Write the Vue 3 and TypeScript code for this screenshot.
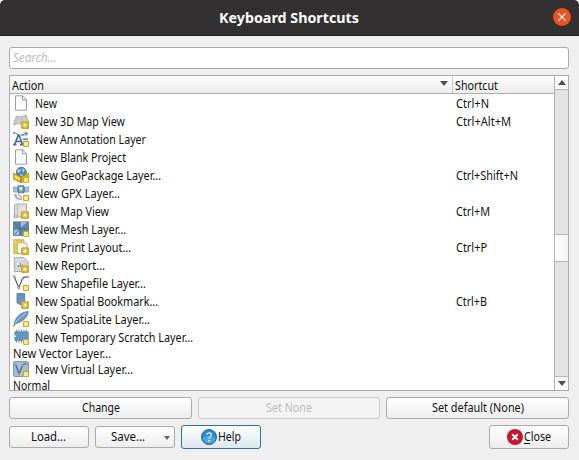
<script setup lang="ts">
interface Row { label: string; icon?: string; key?: string; badge?: 'star' | 'box'; w: number }

const rows: Row[] = [
  { label: 'New', icon: 'page', key: 'Ctrl+N', w: 22 },
  { label: 'New 3D Map View', icon: 'map3d', key: 'Ctrl+Alt+M', badge: 'star', w: 90 },
  { label: 'New Annotation Layer', icon: 'annot', badge: 'box', w: 111 },
  { label: 'New Blank Project', icon: 'page', w: 91 },
  { label: 'New GeoPackage Layer…', icon: 'geo', key: 'Ctrl+Shift+N', badge: 'box', w: 126 },
  { label: 'New GPX Layer…', icon: 'gpx', badge: 'box', w: 85 },
  { label: 'New Map View', icon: 'map', key: 'Ctrl+M', badge: 'star', w: 74 },
  { label: 'New Mesh Layer…', icon: 'mesh', badge: 'box', w: 91 },
  { label: 'New Print Layout…', icon: 'print', key: 'Ctrl+P', badge: 'star', w: 96 },
  { label: 'New Report…', icon: 'report', badge: 'star', w: 70 },
  { label: 'New Shapefile Layer…', icon: 'shape', badge: 'box', w: 111 },
  { label: 'New Spatial Bookmark…', icon: 'bookmark', key: 'Ctrl+B', badge: 'star', w: 123 },
  { label: 'New SpatiaLite Layer…', icon: 'feather', badge: 'box', w: 115 },
  { label: 'New Temporary Scratch Layer…', icon: 'chip', badge: 'box', w: 158 },
  { label: 'New Vector Layer…', w: 98 },
  { label: 'New Virtual Layer…', icon: 'virtual', badge: 'box', w: 98 },
  { label: 'Normal', w: 37 },
]

const keyWidths: Record<string, number> = {
  'Ctrl+N': 33, 'Ctrl+Alt+M': 55, 'Ctrl+Shift+N': 62, 'Ctrl+M': 34, 'Ctrl+P': 31, 'Ctrl+B': 31,
}
</script>

<template>
  <div class="dialog">
    <header class="titlebar">
      <svg class="title" width="140" height="20"><text x="0" y="14" textLength="140" lengthAdjust="spacingAndGlyphs">Keyboard Shortcuts</text></svg>
      <button class="x" aria-label="Close window">
        <svg width="18" height="18" viewBox="0 0 18 18"><circle cx="9" cy="9" r="9" fill="#e95420" /><path d="M5.4 5.4l7.2 7.2M12.6 5.4l-7.2 7.2" stroke="#fff" stroke-width="1.3" /></svg>
      </button>
    </header>
    <main>
      <div class="search">Search…</div>
      <section class="table">
        <div class="content">
          <div class="head">
            <div class="h1"><svg class="label" width="34" height="16"><text y="13" textLength="32" lengthAdjust="spacingAndGlyphs">Action</text></svg><svg class="sort" width="8" height="5"><path d="M0 0h8L4 5z" fill="#505050" /></svg></div>
            <div class="h2"><svg width="45" height="16"><text y="13" textLength="43" lengthAdjust="spacingAndGlyphs">Shortcut</text></svg></div>
          </div>
          <div class="rows">
            <div v-for="r in rows" :key="r.label" class="row" :class="{ plain: !r.icon }">
              <div class="name">
                <svg v-if="r.icon" class="icon" width="16" height="16" viewBox="0 0 16 16">
                  <path v-if="r.icon === 'page'" d="M2.5 .8h7l4 4v10.4h-11zM9.5 .8v4h4" fill="#fbfbfb" stroke="#9c9e9c" />
                  <g v-else-if="r.icon === 'map3d'">
                    <path d="M3.5 3l4 .7L13 2l3 8-6 1.5-5-1L.3 12z" fill="#c3c5c2" stroke="#aaaca8" stroke-width=".8" /><path d="M7.5 4l-2 6.5M10 3.5l2 6.5M2 8l12-1" stroke="#d9d9d7" stroke-width=".6" />
                  </g>
                  <g v-else-if="r.icon === 'annot'">
                    <path d="M1.8 13.2L5 4.8h1.3l3.1 8.4M3.3 10.5h4.8M.2 13.7h3.2M7 13.7h3" fill="none" stroke="#3f6c98" stroke-width="1.7" />
                    <path d="M1 2h2l2 2h5l1.5-1.5" fill="none" stroke="#71899d" /><path d="M.2 1.2h1.6v1.6H.2zM4.5 3.2h1.6v1.6H4.5zM9 3.2h1.6v1.6H9z" fill="#54718a" /><path d="M13 0l.8 1.7 2 .1-1.5 1.4.4 1.9-1.7-1-1.7 1 .4-1.9-1.5-1.4 2-.1zM9.8 7.3H15v1.9H9.8z" fill="#6890b6" />
                  </g>
                  <g v-else-if="r.icon === 'geo'">
                    <circle cx="8.3" cy="5.2" r="5" fill="#5686b2" stroke="#315c85" stroke-width=".7" /><path d="M4 3l3-1 1 2-3 2zM9 1l3 2-2 3zM7 7l3 1-2 2z" fill="#bdd4e3" />
                    <path d="M.5 6L8 10v5.7L.5 12.2zM15.7 6L8 10v5.7l7.7-3.5z" fill="#dcb515" stroke="#937b18" stroke-width=".6" /><path d="M1.7 8L7 10.7v2.8L1.7 11z" fill="#f8de60" />
                  </g>
                  <g v-else-if="r.icon === 'gpx'">
                    <path d="M.5 2h4v5h-4zM11.5 2h4v5h-4z" fill="#a8c4dc" stroke="#7295b2" stroke-width=".7" /><path d="M5 .8h6v7H5zM4 4.5h8" fill="#7599b9" stroke="#426e94" stroke-width=".8" />
                    <path d="M6.2 2h3.4v3.4H6.2z" fill="#d6e4ec" /><path d="M1 9c0 4 3 6.5 8 6.3v-2c-3.2 0-5.4-1.3-5.4-4.3z" fill="#9bb6ca" /><path d="M5.8 9c0 2 1 3 3.2 3" fill="none" stroke="#668baa" />
                  </g>
                  <g v-else-if="r.icon === 'map'">
                    <path d="M2.5 1h11v13h-12V2z" fill="#dddedc" stroke="#a9aba8" /><path d="M4.5 1v13" stroke="#b9bbb8" /><path d="M.7 12.3h3v2.8h-3z" fill="#c2c4c1" stroke="#a8aaa7" stroke-width=".6" /><path d="M5.5 5h7M8 10l4-8" stroke="#ebebea" stroke-width=".7" />
                  </g>
                  <g v-else-if="r.icon === 'mesh'">
                    <path d="M.5.8h15v13.7H.5z" fill="#5f89ae" stroke="#577792" stroke-width=".8" /><path d="M7.5 1h7.7L7.5 8zM1 8h5.5v6H1z" fill="#a2bfd6" /><path d="M.5 8h15M7 1v13M7 8l8-7M1 14l6-6M1 1l6 7" fill="none" stroke="#395c7b" stroke-width=".7" />
                  </g>
                  <g v-else-if="r.icon === 'print'">
                    <path d="M4 2.5h7l3 3v9H4z" fill="#fff" stroke="#a2a49e" /><path d="M.8 .7h10v3H4.2v11H.8z" fill="#f0d568" stroke="#c0a334" stroke-width=".8" /><path d="M3.5 1v1.3M6 1v1.3M8.5 1v1.3M1 6h1.5M1 9h1.5M1 12h1.5" stroke="#a98e2e" stroke-width=".6" />
                    <path d="M10.5 2.5v3.2H14z" fill="#d6d7d3" />
                  </g>
                  <g v-else-if="r.icon === 'report'">
                    <path d="M1.3.7h9.7l4 4v9.8H1.3z" fill="#dddddd" stroke="#a5a7a5" /><path d="M3 5h9v7H3z" fill="#f1f1f3" stroke="#b3b7bd" stroke-width=".7" /><path d="M5.2 10.5V8M7.2 10.5V6" stroke="#6f8ba8" stroke-width="1.3" /><path d="M9.6 10V6.5" stroke="#bd777b" stroke-width="1.3" />
                  </g>
                  <g v-else-if="r.icon === 'shape'">
                    <path d="M1.3 1.8L5.8 12.8 9.3 4Q10.5 1.5 14.8 2" fill="none" stroke="#59636a" stroke-width="1.2" /><path d="M.4 .8h1.8v1.8H.4zM4.9 12h1.8v1.8H4.9zM8.4 3.2h1.8V5H8.4zM13.8 1h1.8v1.8h-1.8z" fill="#eef0f1" stroke="#7d878f" stroke-width=".7" />
                  </g>
                  <path v-else-if="r.icon === 'bookmark'" d="M4 .6h7.7v13.8L8 12 4 9.8z" fill="#6695c1" stroke="#50728f" stroke-width=".8" />
                  <g v-else-if="r.icon === 'feather'">
                    <path d="M1.3 13.5C2 6 8 1 15.2.5c-.3 5-5.2 10.7-13 12.2" fill="#6d9ac3" stroke="#466d91" stroke-width=".7" /><path d="M1 15C3 9.5 7 6 13 2" fill="none" stroke="#d4e2ed" stroke-width=".8" /><path d="M.5 15.5l2-3.5" stroke="#4b6880" />
                  </g>
                  <g v-else-if="r.icon === 'chip'">
                    <path d="M3.5 .8v13M6 .8v13M8.5 .8v13M11 .8v10M13.5 .8v10" stroke="#7e95a8" stroke-width="1.1" /><path d="M1.8 2.8h13.5v8.6H1.8z" fill="#6595c2" stroke="#5380a7" stroke-width=".7" /><path d="M1.4 6.3h1.4v1.6H1.4z" fill="#fff" />
                  </g>
                  <g v-else-if="r.icon === 'virtual'">
                    <rect x=".5" y=".5" width="15" height="15" rx="1.5" fill="#a7bdcf" stroke="#7f9bb2" /><path d="M2.3 2.8L6 12.8 9.5 4.5Q11 2 14 2.7" fill="none" stroke="#465c70" stroke-width="1.1" /><path d="M1.5 2h1.6v1.6H1.5zM5.2 12h1.6v1.6H5.2zM8.7 3.5h1.6v1.6H8.7zM13 2h1.6v1.6H13z" fill="#e7eef3" stroke="#647f96" stroke-width=".5" />
                  </g>
                  <g v-if="r.badge === 'box'"><rect x="10.5" y="10.5" width="5" height="5" rx=".7" fill="#f5e9a4" stroke="#cfaa20" stroke-width="1.2" /></g>
                  <g v-else-if="r.badge === 'star'"><rect x="8" y="8.2" width="8" height="7.8" rx="1.2" fill="#cfab2a" /><path d="M12 9.5v5.2M9.4 12.1h5.2M10.3 10.4l3.4 3.4M13.7 10.4l-3.4 3.4" stroke="#fff4c0" stroke-width=".9" /></g>
                </svg>
                <svg class="label" :width="r.w + 2" height="16"><text x="0" y="12.7" :textLength="r.w" lengthAdjust="spacingAndGlyphs">{{ r.label }}</text></svg>
              </div>
              <svg v-if="r.key" class="label" width="70" height="16"><text x="0" y="12.7" :textLength="keyWidths[r.key]" lengthAdjust="spacingAndGlyphs">{{ r.key }}</text></svg>
            </div>
          </div>
        </div>
        <div class="scroll">
          <div class="arrow"><svg width="8" height="5"><path d="M0 5h8L4 0z" fill="#505050" /></svg></div>
          <div class="track"><div class="thumb"></div></div>
          <div class="arrow down"><svg width="8" height="5"><path d="M0 0h8L4 5z" fill="#505050" /></svg></div>
        </div>
      </section>
      <div class="actions">
        <button><svg width="38" height="16"><text y="12" textLength="38" lengthAdjust="spacingAndGlyphs">Change</text></svg></button>
        <button disabled><svg width="46" height="16"><text y="12" textLength="46" lengthAdjust="spacingAndGlyphs">Set None</text></svg></button>
        <button><svg width="92" height="16"><text y="12" textLength="92" lengthAdjust="spacingAndGlyphs">Set default (None)</text></svg></button>
      </div>
      <footer>
        <button><svg width="36" height="16"><text y="12" textLength="35" lengthAdjust="spacingAndGlyphs">Load…</text></svg></button>
        <button class="save"><svg width="35" height="16"><text y="12" textLength="34" lengthAdjust="spacingAndGlyphs">Save…</text></svg><svg class="caret" width="6" height="4"><path d="M0 0h6L3 4z" fill="#606060" /></svg></button>
        <button class="tall help">
          <svg width="16" height="16" viewBox="0 0 16 16"><circle cx="8" cy="8" r="7.5" fill="#268bd8" stroke="#34617f" /><path d="M1.5 9Q8 5 14.5 9A6.6 6.6 0 0 1 1.5 9" fill="#4da7e5" /><path d="M5.7 5.7Q6 3.8 8.1 3.8q2.4 0 2.4 1.9c0 1.7-2.3 1.8-2.3 4" fill="none" stroke="#fff" stroke-width="1.2" /><circle cx="8.2" cy="12" r=".9" fill="#fff" /></svg>
          <svg width="24" height="16"><text y="12" textLength="23" lengthAdjust="spacingAndGlyphs">Help</text></svg>
        </button>
        <button class="tall close">
          <svg width="16" height="16" viewBox="0 0 16 16"><circle cx="8" cy="8" r="8" fill="#c9142c" /><path d="M5.2 5.2l5.6 5.6M10.8 5.2l-5.6 5.6" stroke="#fff" stroke-width="2" /></svg>
          <svg width="28" height="16"><text y="12" textLength="27" lengthAdjust="spacingAndGlyphs">Close</text><path d="M0 14.5h6" stroke="#111" /></svg>
        </button>
      </footer>
    </main>
  </div>
</template>

<style>
body { margin: 0; background: #efefef; }
</style>
<style scoped>
* { box-sizing: border-box; }
.dialog { width: 579px; height: 460px; background: #efefef; font: 12px/16px "Noto Sans", sans-serif; color: #111; overflow: hidden; }
svg { display: block; flex: none; overflow: visible; }
text { fill: currentColor; }
button { font: inherit; color: inherit; padding: 0; }
.titlebar { height: 36px; background: #333031; border-bottom: 1px solid #1e1c1d; border-radius: 5px 5px 0 0; display: flex; align-items: center; padding: 0 8px 0 219px; justify-content: space-between; color: #fff; font-size: 14px; font-weight: 700; }
.title { margin-top: 2px; }
.x { border: 0; background: none; width: 18px; height: 18px; margin-top: -2px; }
main { padding: 11px 10px 0 9px; }
.search { height: 22px; border: 1px solid #ababab; border-radius: 3px; background: #fff; color: #bdbdbd; font-style: italic; padding: 2px 3px; letter-spacing: -.2px; }
.table { height: 316px; margin-top: 6px; border: 1px solid #ababab; display: flex; background: #fff; overflow: hidden; }
.content { width: 544px; height: 314px; overflow: hidden; }
.head { height: 18px; display: flex; background: linear-gradient(#fff, #ebebeb); border-bottom: 1px solid #b0b0b0; }
.h1 { width: 443px; border-right: 1px solid #c9c9c9; padding: 1px 4px 0 2px; display: flex; justify-content: space-between; }
.sort { margin-top: 4px; }
.h2 { padding: 1px 0 0 2px; }
.row { height: 18px; display: flex; align-items: center; }
.row.plain { height: 14px; }
.name { width: 446px; padding-left: 3px; display: flex; gap: 6px; }
.scroll { width: 14px; border-left: 1px solid #b5b5b5; display: flex; flex-direction: column; }
.arrow { height: 14px; border-bottom: 1px solid #b5b5b5; background: #fafafa; display: flex; align-items: center; justify-content: center; }
.arrow.down { border: 0; border-top: 1px solid #b5b5b5; }
.track { flex: 1; background: #e3e3e3; padding-top: 144px; }
.thumb { height: 28px; background: linear-gradient(90deg, #fff, #f3f3f3); border: solid #b5b5b5; border-width: 1px 0; }
.actions { margin-top: 6px; display: grid; grid-template-columns: 183px 182px 183px; gap: 6px; }
button:not(.x) { height: 22px; border: 1px solid #ababab; border-radius: 3px; background: linear-gradient(#fff, #ededed); display: flex; align-items: center; justify-content: center; }
button:disabled { color: #bdbdbd; border-color: #c9c9c9; background: #f3f3f3; }
footer { display: flex; align-items: center; gap: 6px; margin-top: 6px; }
footer button:not(.x) { width: 80px; }
footer button.tall { height: 24px; }
.save { position: relative; padding-right: 13px !important; }
.caret { position: absolute; right: 4px; top: 9px; }
.help { border-color: #2874a3 !important; background: linear-gradient(#fff, #dde6ee) !important; }
.close { margin-left: auto; }
.help, .close { gap: 1px; }
</style>
